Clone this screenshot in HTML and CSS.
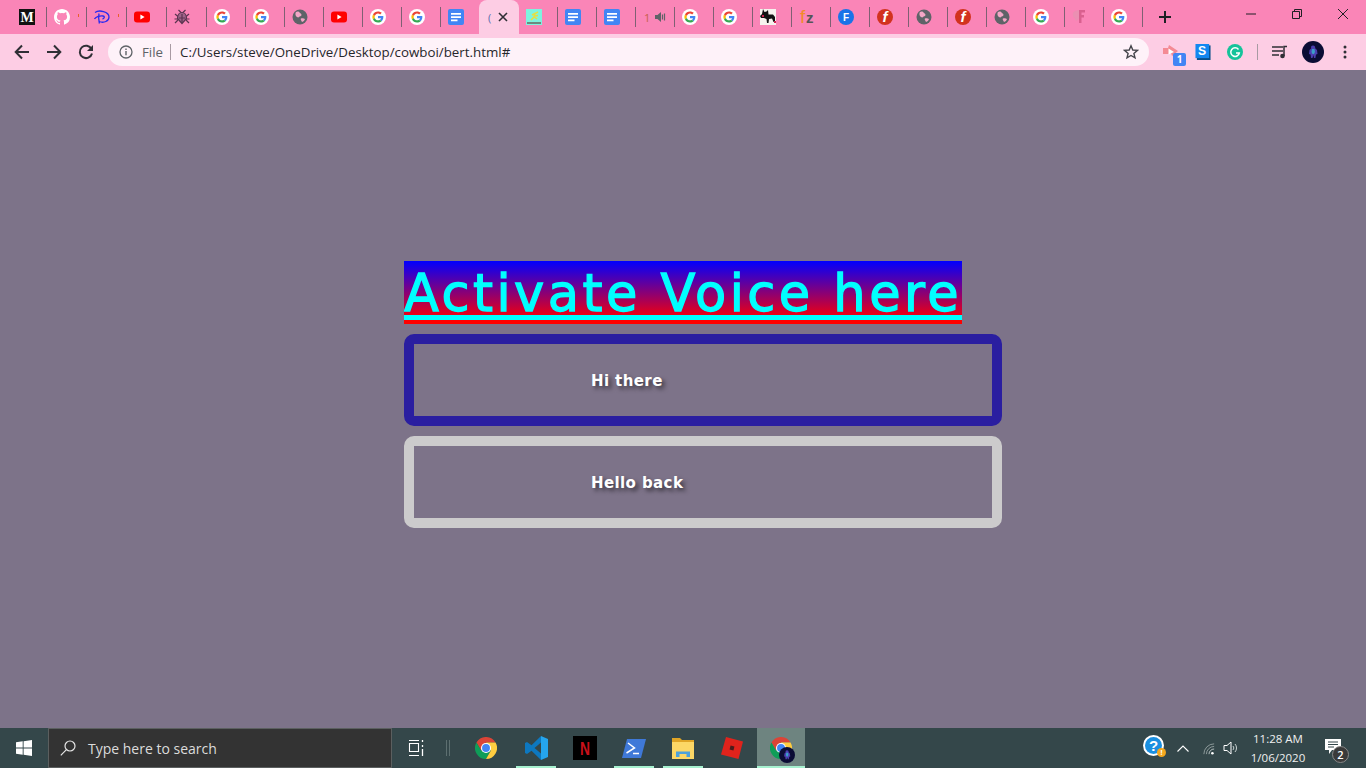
FILE: index.html
```html
<!DOCTYPE html>
<html lang="en">
<head>
<meta charset="utf-8">
<title>bert.html</title>
<link rel="stylesheet" href="styles.css">
</head>
<body>
<svg class="defs" aria-hidden="true">
  <symbol id="g" viewBox="0 0 16 16"><circle cx="8" cy="8" r="8" fill="#fff"/><g transform="translate(2.4 2.4) scale(.233)"><path fill="#EA4335" d="M24 9.5c3.54 0 6.71 1.22 9.21 3.6l6.85-6.85C35.9 2.38 30.47 0 24 0 14.62 0 6.51 5.38 2.56 13.22l7.98 6.19C12.43 13.72 17.74 9.5 24 9.5z"/><path fill="#4285F4" d="M46.98 24.55c0-1.57-.15-3.09-.38-4.55H24v9.02h12.94c-.58 2.96-2.26 5.48-4.78 7.18l7.73 6c4.51-4.18 7.09-10.36 7.09-17.65z"/><path fill="#FBBC05" d="M10.53 28.59c-.48-1.45-.76-2.99-.76-4.59s.27-3.14.76-4.59l-7.98-6.19C.92 16.46 0 20.12 0 24c0 3.88.92 7.54 2.56 10.78l7.97-6.19z"/><path fill="#34A853" d="M24 48c6.48 0 11.93-2.13 15.89-5.81l-7.73-6c-2.15 1.45-4.92 2.3-8.16 2.3-6.26 0-11.57-4.22-13.47-9.91l-7.98 6.19C6.51 42.62 14.62 48 24 48z"/></g></symbol>
  <symbol id="yt" viewBox="0 0 16 16"><rect y="2.500" width="16" height="11" rx="3" fill="#f00"/><path d="M6.400 5.500v5L10.600 8z" fill="#fff"/></symbol>
  <symbol id="globe" viewBox="0 0 16 16"><circle cx="8" cy="8" r="7.500" fill="#5f6368"/><path d="M4 3c1.500-1 3-.5 3.500.5S9.500 4.500 9.500 6 7.500 7 7 8 4.500 8 4 7 3 4.500 4 3zM9 9.500c1-.5 3-.5 4 .5-.5 1.500-1.500 2.500-3 3-.5-1-2-3-1-3.500z" fill="#f4a6c6"/></symbol>
  <symbol id="docs" viewBox="0 0 16 16"><rect width="16" height="16" rx="2" fill="#4285f4"/><path d="M3 4h10v1.800H3zM3 7.200h10V9H3zM3 10.400h6.500v1.800H3z" fill="#fff"/></symbol>
  <symbol id="chrome" viewBox="0 0 24 24"><path d="M12 6h10.400A12 12 0 0 0 1.600 6l5.200 9z" fill="#db4437"/><path d="M6.800 15 1.600 6A12 12 0 0 0 12 24l5.200-9z" fill="#0f9d58"/><path d="M12 6h10.400A12 12 0 0 1 12 24l5.200-9z" fill="#ffcd40"/><circle cx="12" cy="12" r="5.500" fill="#fff"/><circle cx="12" cy="12" r="4.300" fill="#4285f4"/></symbol>
  <symbol id="avatar" viewBox="0 0 22 22"><circle cx="11" cy="11" r="11" fill="#0b0c34"/><path d="M11 4.500c1.600 0 2.400 1.300 2.200 2.800l1.800 1.700.5 4-1.500.4-.6 3.600h-1.400L11.500 14l-1 3H9l-.4-3.600-1.600-.4.500-4 1.800-1.700C8.600 5.800 9.400 4.500 11 4.500z" fill="#4c3fb0"/><path d="M10 8h2.500l.5 3-1 2h-1.500L9.500 11z" fill="#3aa0c8"/></symbol>
</svg>

<header class="tabstrip">
  <div class="tab tab-wide tab-first"><svg class="fav" viewBox="0 0 16 16"><rect width="16" height="16" fill="#111"/><text x="8" y="13" text-anchor="middle" font-family="Liberation Serif,serif" font-weight="700" font-size="14" fill="#fff">M</text></svg></div>
  <div class="tab tab-wide"><svg class="fav" viewBox="0 0 16 16"><path fill="#fff" d="M8 0C3.580 0 0 3.580 0 8c0 3.540 2.290 6.530 5.470 7.590.4.070.55-.17.55-.38v-1.340c-2.230.48-2.700-1.070-2.700-1.070-.36-.92-.89-1.170-.89-1.170-.73-.5.050-.49.050-.49.800.060 1.230.83 1.230.83.710 1.220 1.870.87 2.330.66.070-.52.280-.87.510-1.070-1.780-.2-3.640-.89-3.640-3.950 0-.87.310-1.590.82-2.150-.08-.2-.36-1.020.080-2.120 0 0 .67-.21 2.200.82a7.600 7.600 0 0 1 4 0c1.530-1.040 2.200-.82 2.200-.82.440 1.100.16 1.920.08 2.120.51.560.82 1.270.82 2.150 0 3.070-1.870 3.750-3.650 3.950.29.250.54.730.54 1.480v2.200c0 .21.150.46.550.38A8.010 8.010 0 0 0 16 8c0-4.420-3.580-8-8-8z"/></svg><i class="mark mark-orange"></i></div>
  <div class="tab tab-wide"><svg class="fav" viewBox="0 0 16 16" fill="none" stroke="#2a2af0" stroke-width="1.300"><path d="M1 3.500C5 .5 15 2.500 15 8c0 4-5 6.500-10 4.500"/><path d="M5 4.500c-.6 3-.4 6.500.4 10"/><path d="M.5 10C2 7.800 6 6.500 9 7c2 .4 1.500 2.500-.5 3"/></svg><i class="mark mark-orange"></i></div>
  <div class="tab tab-wide"><svg class="fav"><use href="#yt"/></svg></div>
  <div class="tab tab-wide"><svg class="fav" viewBox="0 0 16 16" fill="none" stroke="#5b3550" stroke-width="1.200"><path d="M4.500 1 8 4.500 11.500 1M1 14l3-3M15 14l-3-3M1 5l3 2.500M15 5l-3 2.500M.5 10H4M15.500 10H12"/><path d="M8 3.500c2.500 0 4.500 2.500 4.500 6L8 14.500 3.500 9.500C3.500 6 5.500 3.500 8 3.500z" fill="#a0648a"/><path d="M8 5v9M5 9h6"/></svg></div>
  <div class="tab"><svg class="fav"><use href="#g"/></svg></div>
  <div class="tab"><svg class="fav"><use href="#g"/></svg></div>
  <div class="tab"><svg class="fav"><use href="#globe"/></svg></div>
  <div class="tab"><svg class="fav"><use href="#yt"/></svg></div>
  <div class="tab"><svg class="fav"><use href="#g"/></svg></div>
  <div class="tab"><svg class="fav"><use href="#g"/></svg></div>
  <div class="tab tab-plain"><svg class="fav"><use href="#docs"/></svg></div>
  <div class="tab tab-active"><span class="spin">(</span><svg class="close" viewBox="0 0 10 10"><path d="M1 1l8 8M9 1 1 9" stroke="#2f2f35" stroke-width="1.600" fill="none"/></svg></div>
  <div class="tab"><svg class="fav" viewBox="0 0 16 16"><rect width="16" height="16" fill="#7ef3df"/><rect x="1" y="13" width="14" height="2" fill="#6d8a80"/><path d="M5 11l3-3 1-3.500L12 3M8 8l3 2M6 6l3-1.500M9 7l3-.5" stroke="#e6e040" stroke-width="1.500" fill="none"/></svg></div>
  <div class="tab"><svg class="fav"><use href="#docs"/></svg></div>
  <div class="tab"><svg class="fav"><use href="#docs"/></svg></div>
  <div class="tab tab-sound"><span class="num">1</span><svg class="speaker" viewBox="0 0 11 12"><path d="M0 4h2.500L6 1v10L2.500 8H0z" fill="#5f6368"/><path d="M7.500 3.500v5M9.500 2.500v7" stroke="#5f6368" stroke-width="1.200"/></svg></div>
  <div class="tab"><svg class="fav"><use href="#g"/></svg></div>
  <div class="tab"><svg class="fav"><use href="#g"/></svg></div>
  <div class="tab"><svg class="fav" viewBox="0 0 16 16"><rect width="16" height="16" fill="#f6f2ee"/><path d="M3 0l1.500 3 2-.5L8 1l.5 4.500H13l2 2.500v5h-1.500L12 9.500 9 10l-.5 4H7L6.500 10 4 9 1 9 0 7l2-2z" fill="#111"/><rect x="2" y="6" width="2" height="2" fill="#d02050"/><rect x="14" y="12" width="2" height="2" fill="#d02050"/></svg></div>
  <div class="tab"><span class="fz"><span class="fz-f">f</span><span class="fz-z">z</span></span></div>
  <div class="tab"><svg class="fav" viewBox="0 0 16 16"><circle cx="8" cy="8" r="8" fill="#1a73e8"/><text x="8" y="11.500" text-anchor="middle" font-family="Liberation Sans,sans-serif" font-weight="700" font-size="10" fill="#fff">F</text></svg></div>
  <div class="tab"><span class="flash">f</span></div>
  <div class="tab"><svg class="fav"><use href="#globe"/></svg></div>
  <div class="tab"><span class="flash">f</span></div>
  <div class="tab"><svg class="fav"><use href="#globe"/></svg></div>
  <div class="tab"><svg class="fav"><use href="#g"/></svg></div>
  <div class="tab"><svg class="fav" viewBox="0 0 16 16"><path d="M7 1h6v2.500H9.500V6H12v2.500H9.500V14H7z" fill="#d9608f"/><path d="M1 4c1-2 3-2.500 6-3v9c-2 .5-2 2-3 2L3 9.500C1 8.500.500 6 1 4z" fill="#eb8fb2"/></svg></div>
  <div class="tab"><svg class="fav"><use href="#g"/></svg></div>
  <svg class="newtab" viewBox="0 0 12 12"><path d="M6 0v12M0 6h12" stroke="#1f1f24" stroke-width="2"/></svg>
  <div class="winctl">
    <svg class="wbtn" viewBox="0 0 46 12"><path d="M18 6h10" stroke="#1f1f24"/></svg>
    <svg class="wbtn" viewBox="0 0 46 12"><path d="M18.500 3.500h7v7h-7zM20.500 3.500v-2h7v7h-2" stroke="#1f1f24" fill="none"/></svg>
    <svg class="wbtn" viewBox="0 0 46 12"><path d="M18 1l10 10M28 1 18 11" stroke="#1f1f24" fill="none"/></svg>
  </div>
</header>

<nav class="toolbar">
  <svg class="nav" viewBox="0 0 16 16"><path d="M15 8H2M8 1.500 1.700 8 8 14.500" stroke="#2f2f35" stroke-width="2" fill="none"/></svg>
  <svg class="nav" viewBox="0 0 16 16"><path d="M1 8h13M8 1.500 14.300 8 8 14.500" stroke="#2f2f35" stroke-width="2" fill="none"/></svg>
  <svg class="nav" viewBox="0 0 16 16"><path d="M13.500 5A6.200 6.200 0 1 0 14 9.500" stroke="#2f2f35" stroke-width="2" fill="none"/><path d="M15 1v6H9z" fill="#2f2f35"/></svg>
  <div class="omnibox">
    <svg class="info" viewBox="0 0 14 14"><circle cx="7" cy="7" r="6" fill="none" stroke="#5f6368" stroke-width="1.300"/><path d="M6.300 6h1.400v4.300H6.300zM6.300 3.500h1.400V5H6.300z" fill="#5f6368"/></svg>
    <span class="scheme">File</span>
    <span class="omni-sep"></span>
    <span class="url">C:/Users/steve/OneDrive/Desktop/cowboi/bert.html#</span>
    <svg class="star" viewBox="0 0 16 16"><path d="M8 1.800 9.800 6l4.600.4-3.500 3 1.100 4.500L8 11.500l-4 2.400 1.100-4.500-3.500-3L6.200 6z" fill="none" stroke="#45454b" stroke-width="1.400"/></svg>
  </div>
  <div class="exts">
    <div class="ext"><svg class="fav" viewBox="0 0 16 16"><path d="M0 4h5l1-3 9 6-6 5-1-3-3 1H0z" fill="#f48a94"/><path d="M5.500 4.500 11 8l-5.500 2.500z" fill="#fff"/></svg><span class="badge">1</span></div>
    <div class="ext"><svg class="fav" viewBox="0 0 16 17"><rect x="1.500" y="1.500" width="14.500" height="15.500" fill="#0a4f8a"/><rect width="14.500" height="15" fill="#1387f0"/><text x="7" y="12" text-anchor="middle" font-family="Liberation Sans,sans-serif" font-weight="700" font-size="13" fill="#fff">S</text></svg></div>
    <div class="ext ext-last"><svg class="fav" viewBox="0 0 16 16"><circle cx="8" cy="8" r="8" fill="#15c39a"/><path d="M11.500 5.500A4.300 4.300 0 1 0 12.300 9H9" stroke="#fff" stroke-width="1.500" fill="none"/></svg></div>
    <span class="tool-sep"></span>
    <svg class="queue" viewBox="0 0 16 14"><path d="M0 2h11M0 6h11M0 10h7M12 11V1.500h3" stroke="#2f2f35" stroke-width="1.500" fill="none"/><circle cx="10.500" cy="11" r="2.300" fill="#2f2f35"/></svg>
    <svg class="avatar"><use href="#avatar"/></svg>
    <svg class="dots" viewBox="0 0 4 14"><circle cx="2" cy="2" r="1.500" fill="#2f2f35"/><circle cx="2" cy="7" r="1.500" fill="#2f2f35"/><circle cx="2" cy="12" r="1.500" fill="#2f2f35"/></svg>
  </div>
</nav>

<main class="page">
  <h1 class="title">Activate Voice here</h1>
  <div class="msg msg-blue"><p>Hi there</p></div>
  <div class="msg msg-grey"><p>Hello back</p></div>
</main>

<footer class="taskbar">
  <div class="start"><svg viewBox="0 0 16 16" class="winlogo"><path d="M0 2.300 6.700 1.300v6.300H0zM7.600 1.200 16 0v7.600H7.600zM0 8.400h6.700v6.300L0 13.700zM7.600 8.400H16V16l-8.400-1.200z" fill="#fff"/></svg></div>
  <div class="search">
    <svg class="lens" viewBox="0 0 16 16"><circle cx="10" cy="6" r="5" fill="none" stroke="#e6e6e6" stroke-width="1.200"/><path d="M6.400 9.600.8 15.400" stroke="#e6e6e6" stroke-width="1.200"/></svg>
    <span>Type here to search</span>
  </div>
  <div class="taskview"><svg viewBox="0 0 16 16" class="tv"><path d="M1 .5h10M1 15.500h10M1.500 3.500h9v8h-9z" stroke="#fff" stroke-width="1.100" fill="none"/><path d="M14.500 0v2M14.500 5v2M14.500 9v7" stroke="#fff" stroke-width="1.300"/></svg></div>
  <span class="divider"></span>
  <div class="apps">
    <div class="app"><svg class="appicon icon-22"><use href="#chrome"/></svg></div>
    <div class="app app-open"><svg class="appicon" viewBox="0 0 24 24"><path d="M17 0 7.500 9.300 3 6 1 7v10l2 1 4.500-3.300L17 24V17.500L10.500 12 17 6.500z" fill="#0d78c0"/><path d="M17 0 24 3v18l-7 3z" fill="#25a5ee"/></svg></div>
    <div class="app"><svg class="appicon" viewBox="0 0 24 24"><rect width="24" height="24" fill="#000"/><text x="12" y="19" text-anchor="middle" font-family="Liberation Sans,sans-serif" font-weight="700" font-size="19" fill="#c8101a" textLength="10" lengthAdjust="spacingAndGlyphs">N</text></svg></div>
    <div class="app app-open"><svg class="appicon" viewBox="0 0 24 24"><path d="M5 3h19l-5 19H0z" fill="#3f79d8"/><path d="M6 7l6.500 5L4.500 17M11 17.500h6" stroke="#fff" stroke-width="1.500" fill="none"/></svg></div>
    <div class="app app-open"><svg class="appicon" viewBox="0 0 24 24"><path d="M1 2h8l2 2h12v6H1z" fill="#e0a526"/><path d="M1 6h22v17H1z" fill="#fcd766"/><path d="M5 21v-5.500h14V21h-3.500v-3h-7v3z" fill="#4da2dc"/></svg></div>
    <div class="app"><svg class="appicon" viewBox="0 0 24 24"><path d="M6 1 23 5.500 18.500 23 1 18.500z" fill="#e0231c"/><rect x="10" y="10" width="4" height="4" transform="rotate(14 12 12)" fill="#4a1c1c"/></svg></div>
    <div class="app app-open app-active"><svg class="appicon icon-22"><use href="#chrome"/></svg><svg class="app-avatar"><use href="#avatar"/></svg></div>
  </div>
  <div class="tray">
    <div class="help"><span class="help-q">?</span><i class="help-dot">!</i></div>
    <svg class="chev" viewBox="0 0 12 7"><path d="M.5 6.500 6 1l5.500 5.500" stroke="#fff" stroke-width="1.100" fill="none"/></svg>
    <svg class="wifi" viewBox="0 0 14 14"><path d="M1 13A12 12 0 0 1 13 1M4 13a9 9 0 0 1 9-9" stroke="#9aa6a6" stroke-width="1" fill="none"/><path d="M7 13a6 6 0 0 1 6-6" stroke="#c9d2d2" fill="none"/><circle cx="11" cy="12" r="1.500" fill="#fff"/></svg>
    <svg class="vol" viewBox="0 0 16 14"><path d="M1 4.500h3L8 1v12L4 9.500H1z" fill="none" stroke="#fff"/><path d="M10 5a3 3 0 0 1 0 4M12 3a6 6 0 0 1 0 8" stroke="#c9d2d2" fill="none"/></svg>
    <div class="clock"><span>11:28 AM</span><span>1/06/2020</span></div>
    <div class="notif"><svg viewBox="0 0 16 15" class="notif-icon"><path d="M0 0h16v11H7l-3 4v-4H0z" fill="#fff"/><path d="M3 3h10M3 5.500h10M3 8h6" stroke="#34474a"/></svg><span class="notif-count">2</span></div>
  </div>
</footer>
</body>
</html>
```
FILE: styles.css
```css
* { box-sizing: border-box; }
html, body { height: 100%; }
body {
  margin: 0;
  width: 1366px;
  height: 768px;
  overflow: hidden;
  display: flex;
  flex-direction: column;
  background: #7d7389;
  font-family: "Open Sans", "Liberation Sans", sans-serif;
}
.defs { width: 0; height: 0; position: absolute; }

/* tab strip */
.tabstrip {
  height: 34px;
  flex: none;
  display: flex;
  align-items: stretch;
  padding-left: 7px;
  background: #fa85b7;
}
.tab {
  position: relative;
  width: 39px;
  flex: none;
  display: flex;
  align-items: center;
  padding-left: 7px;
  background: linear-gradient(#7f6073, #7f6073) right 7px / 1px 20px no-repeat;
}
.tab-wide { width: 40px; }
.tab-first { padding-left: 12px; }
.tab-plain { width: 38px; background: none; }
.tab-active {
  width: 40px;
  background: #fdcde4;
  border-radius: 8px 8px 0 0;
  padding-left: 9px;
  gap: 5px;
}
.fav { width: 16px; height: 16px; display: block; flex: none; }
.fz {
  width: 16px;
  flex: none;
  display: flex;
  align-items: baseline;
  font-family: "Liberation Sans", sans-serif;
}
.fz-f { width: 6px; margin-left: 1px; color: #f28c28; font-size: 19px; line-height: 18px; }
.fz-z { color: #555; font-size: 15px; font-weight: 700; line-height: 18px; }
.flash {
  width: 16px;
  height: 16px;
  flex: none;
  border-radius: 50%;
  background: #d2321e;
  color: #fff;
  font-family: "Liberation Sans", sans-serif;
  font-size: 15px;
  font-style: italic;
  font-weight: 700;
  line-height: 16px;
  text-align: center;
}
.mark { position: absolute; top: 14px; right: 8px; width: 1px; height: 3px; background: #e8612c; }
.spin { font-size: 11px; color: #5a6fb0; width: 5px; line-height: 1; }
.close { width: 10px; height: 10px; flex: none; }
.tab-sound { gap: 6px; padding-left: 8px; }
.num { font-size: 11px; color: #c4604a; width: 5px; line-height: 1; }
.speaker { width: 11px; height: 12px; flex: none; }
.newtab { width: 12px; height: 12px; margin: 11px 0 0 16px; flex: none; }
.winctl { margin-left: auto; display: flex; }
.wbtn { width: 46px; height: 12px; margin-top: 8px; flex: none; }

/* toolbar */
.toolbar {
  height: 36px;
  flex: none;
  display: flex;
  align-items: center;
  padding: 0 0 0 14px;
  background: #fdcde4;
}
.nav { width: 16px; height: 16px; margin-right: 16px; flex: none; }
.omnibox {
  width: 1041px;
  height: 28px;
  margin-left: -2px;
  flex: none;
  display: flex;
  align-items: center;
  padding-left: 11px;
  border-radius: 14px;
  background: #fef2f9;
  color: #26262b;
}
.info { width: 14px; height: 14px; flex: none; }
.scheme { margin-left: 9px; font-size: 13.3px; color: #5f6368; }
.omni-sep { width: 1px; height: 16px; margin: 0 9px 0 7px; background: #a89aa3; }
.url { font-size: 13.33px; }
.star { width: 16px; height: 16px; margin-left: auto; margin-right: 10px; }
.exts { flex: 1; display: flex; align-items: center; padding-left: 14px; }
.ext { position: relative; width: 32px; flex: none; display: flex; }
.ext-last { width: 30px; }
.badge {
  position: absolute;
  left: 10px;
  top: 9px;
  width: 13px;
  height: 13px;
  border-radius: 2px;
  background: #4285f4;
  color: #fff;
  font-size: 10px;
  font-weight: 700;
  line-height: 13px;
  text-align: center;
}
.tool-sep { width: 1px; height: 16px; margin: 0 14px 0 0; background: #a89aa3; flex: none; }
.queue { width: 16px; height: 14px; flex: none; }
.avatar { width: 22px; height: 22px; margin-left: 14px; flex: none; }
.dots { width: 4px; height: 14px; margin-left: 19px; flex: none; }

/* page */
.page {
  flex: 1;
  padding: 191px 0 0 404px;
  min-height: 0;
}
.title {
  display: block;
  margin: 0 0 10px;
  height: 63px;
  width: 558px;
  overflow: hidden;
  border-bottom: 4px solid #f00;
  background: linear-gradient(#0000ff, #f00);
  color: #0ff;
  font-family: "DejaVu Sans", sans-serif;
  font-size: 51px;
  font-weight: 400;
  letter-spacing: 3.48px;
  line-height: 65px;
  white-space: nowrap;
  -webkit-text-stroke: 1.3px #0ff;
  text-decoration: underline;
  text-decoration-thickness: 5px;
  text-decoration-skip-ink: none;
  text-underline-offset: 4px;
}
.msg {
  width: 598px;
  height: 92px;
  margin-bottom: 10px;
  padding: 2px 0 0 177px;
  display: flex;
  align-items: center;
  border: 10px solid #2a1ea0;
  border-radius: 10px;
}
.msg p {
  margin: 0;
  color: #fff;
  font-family: "DejaVu Sans", sans-serif;
  font-size: 15px;
  font-weight: 700;
  letter-spacing: .4px;
  text-shadow: 3px 3px 4px rgba(0, 0, 0, .55);
}
.msg-grey { border-color: #cccbcc; }

/* taskbar */
.taskbar {
  height: 40px;
  flex: none;
  display: flex;
  align-items: center;
  background: #34474a;
  color: #fff;
}
.start { width: 48px; height: 40px; display: flex; align-items: center; justify-content: center; flex: none; }
.winlogo { width: 16px; height: 16px; }
.search {
  width: 344px;
  height: 40px;
  flex: none;
  display: flex;
  align-items: center;
  gap: 12px;
  padding-left: 11px;
  background: #333;
  border: 1px solid #5b5f5f;
  color: #dcdcdc;
  font-family: "Open Sans", sans-serif;
  font-size: 14px;
}
.lens { width: 16px; height: 16px; flex: none; }
.taskview { width: 48px; display: flex; justify-content: center; flex: none; }
.tv { width: 16px; height: 16px; }
.divider { width: 4px; height: 16px; margin: 0 12px 0 6px; border-left: 1px solid #5d6f70; border-right: 1px solid #5d6f70; flex: none; }
.apps { display: flex; flex: none; }
.app {
  position: relative;
  width: 49px;
  height: 40px;
  display: flex;
  align-items: center;
  padding-left: 13px;
}
.app-open::after {
  content: "";
  position: absolute;
  left: 5px;
  width: 40px;
  bottom: 0;
  height: 2px;
  background: #a6f1cf;
}
.app-active { width: 48px; margin-left: 1px; background: #6e8480; }
.app-active::after { left: 0; width: 48px; }
.appicon { width: 24px; height: 24px; display: block; flex: none; }
.icon-22 { width: 22px; height: 22px; }
.app-avatar { position: absolute; left: 22px; top: 19px; width: 16px; height: 16px; }
.tray { margin-left: auto; display: flex; align-items: center; }
.help { position: relative; width: 21px; height: 21px; margin: 0 13px 5px 0; border-radius: 50%; background: #fff; }
.help-q {
  display: block;
  margin: 2px;
  width: 17px;
  height: 17px;
  border-radius: 50%;
  background: #1a8fe0;
  color: #fff;
  font-family: "Liberation Sans", sans-serif;
  font-weight: 700;
  font-size: 15px;
  line-height: 17px;
  text-align: center;
}
.help-dot {
  position: absolute;
  right: -2px;
  bottom: -1px;
  width: 9px;
  height: 9px;
  border-radius: 50%;
  background: #f4a71e;
  font-style: normal;
  font-size: 7px;
  font-weight: 700;
  line-height: 9px;
  text-align: center;
}
.chev { width: 12px; height: 7px; margin-right: 14px; flex: none; }
.wifi { width: 12px; height: 12px; margin: 2px 8px 0 0; flex: none; }
.vol { width: 16px; height: 14px; margin-right: 8px; flex: none; }
.clock {
  width: 62px;
  display: flex;
  flex-direction: column;
  align-items: center;
  gap: 4px;
  font-family: "Open Sans", sans-serif;
  font-size: 11.5px;
  line-height: 15px;
  color: #f0f0f0;
}
.notif { position: relative; width: 46px; height: 40px; margin-left: 11px; }
.notif-icon { position: absolute; left: 5px; top: 11px; width: 16px; height: 15px; }
.notif-count {
  position: absolute;
  left: 12px;
  top: 18px;
  width: 17px;
  height: 17px;
  border-radius: 50%;
  background: #3a3a3a;
  border: 1px solid #888;
  font-family: "Open Sans", sans-serif;
  font-size: 11px;
  font-weight: 600;
  line-height: 15px;
  text-align: center;
}
```
